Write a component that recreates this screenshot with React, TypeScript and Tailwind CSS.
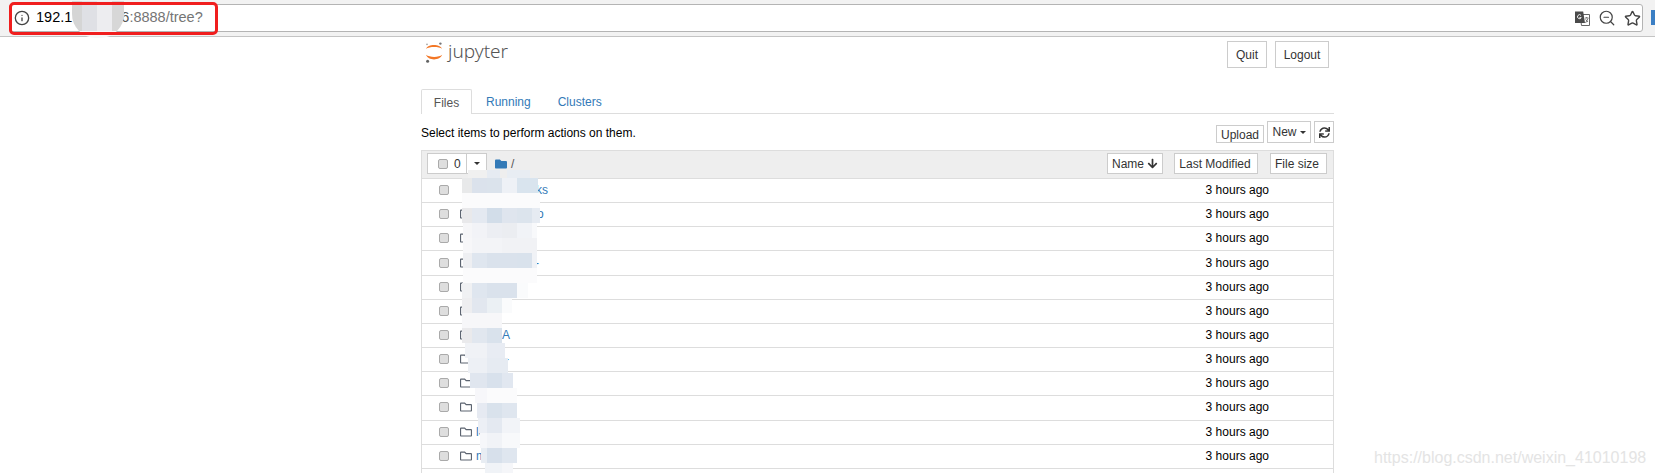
import { Info, Star, ZoomOut } from "lucide-react";
import { FaArrowDown, FaFolder, FaRegFolder, FaSync } from "react-icons/fa";

// row content: tail of the name left visible beside the blurred strip
const rows = [
  { name: "ks", nameX: 114, icon: false },
  { name: "o", nameX: 115, icon: true },
  { name: "", nameX: 0, icon: true },
  { name: "-", nameX: 113, icon: true },
  { name: "", nameX: 0, icon: true },
  { name: "", nameX: 0, icon: true },
  { name: "A", nameX: 80, icon: true },
  { name: "-", nameX: 83, icon: true },
  { name: "", nameX: 0, icon: true },
  { name: "", nameX: 0, icon: true },
  { name: "le", nameX: 54, icon: true },
  { name: "m", nameX: 54, icon: true },
];

// mosaic painted over the file names: top, height, then [left, right, colour] cells
type Strip = [number, number, Array<[number, number, string]>];
const mosaic: Strip[] = [
  [170, 8, [[468, 487, "#f0f0f0"], [487, 500, "#e6ebf2"], [507, 530, "#e8edf3"]]],
  [178, 15, [[462, 472, "#e8e9ea"], [472, 487, "#dbe2ec"], [487, 502, "#dbe3ec"], [502, 517, "#eef1f6"], [517, 538, "#d9e4ee"]]],
  [193, 15, [[462, 540, "#fbfbfc"]]],
  [208, 15, [[462, 472, "#e9e9eb"], [472, 487, "#e4e9f1"], [487, 502, "#d2dde9"], [502, 517, "#dfe5ee"], [517, 532, "#dce4ed"], [532, 540, "#e6ebf2"]]],
  [223, 15, [[463, 472, "#f6f6f8"], [472, 487, "#f2f3f7"], [487, 502, "#eceef3"], [502, 517, "#ebedf1"], [517, 532, "#f1f3f7"], [532, 537, "#f8f9fb"]]],
  [238, 15, [[463, 472, "#f7f7f9"], [472, 502, "#f3f4f7"], [502, 537, "#f1f2f5"]]],
  [253, 15, [[463, 472, "#eeeff2"], [472, 487, "#dfe6ef"], [487, 517, "#dae2ec"], [517, 532, "#d9e2ec"], [532, 537, "#f0f2f6"]]],
  [268, 15, [[463, 537, "#fbfbfc"]]],
  [283, 15, [[462, 472, "#f0f1f3"], [472, 487, "#dfe6ef"], [487, 517, "#dae2ec"], [517, 528, "#fafbfc"]]],
  [298, 15, [[462, 472, "#eeeef0"], [472, 487, "#e2e7ef"], [487, 502, "#ebf0f4"], [502, 512, "#fafbfc"]]],
  [313, 15, [[462, 502, "#f7f7f9"]]],
  [328, 15, [[462, 472, "#eaeaec"], [472, 487, "#e1e7ef"], [487, 502, "#d9e2ec"]]],
  [343, 15, [[465, 487, "#f0f2f6"], [487, 505, "#e8ecf3"]]],
  [358, 15, [[468, 487, "#edf0f5"], [487, 508, "#e6ebf2"]]],
  [373, 15, [[470, 487, "#e0e6ef"], [487, 502, "#d8e1ec"], [502, 513, "#e1e7f0"]]],
  [388, 15, [[475, 487, "#f7f7fa"], [487, 517, "#fbfbfc"]]],
  [403, 15, [[477, 487, "#e6eaf2"], [487, 502, "#d9e2ec"], [502, 517, "#dfe6ef"]]],
  [418, 15, [[478, 487, "#eceff5"], [487, 502, "#e4e9f1"], [502, 520, "#f2f4f8"]]],
  [433, 15, [[480, 487, "#f6f7fa"], [487, 502, "#f1f3f7"], [502, 520, "#f8f9fb"]]],
  [448, 15, [[481, 487, "#e8edf3"], [487, 502, "#d7e0eb"], [502, 517, "#dfe6ef"]]],
  [463, 10, [[485, 502, "#f0f3f7"], [502, 513, "#f5f6f9"]]],
];

function JupyterLogo() {
  return (
    <svg width="19" height="21" viewBox="0 0 19 21" aria-hidden>
      <path d="M1 6.8C2.8 1.6 15 1.6 17.2 6.8C14 4.4 4.5 4.4 1 6.8Z" fill="#f37726" />
      <path d="M1 12.8C3 19 15 19 17.2 12.8C14 15.6 4.5 15.6 1 12.8Z" fill="#f37726" />
      <circle cx="15.4" cy="1.6" r="1.2" fill="#767677" />
      <circle cx="2.6" cy="19.2" r="1.5" fill="#616262" />
      <circle cx="2" cy="2.4" r="0.8" fill="#9e9e9e" />
    </svg>
  );
}

function TranslateIcon() {
  return (
    <svg width="15" height="15" viewBox="0 0 15 15" aria-hidden>
      <path d="M5 3.5H14.5V14.5H6.5Z" fill="#fff" stroke="#666" />
      <path d="M0 0.5H8.2L10 12H0Z" fill="#4a4a4a" />
      <path d="M6 4.4a2 2 0 1 0 0.3 2.2H4.4" fill="none" stroke="#fff" strokeWidth="0.9" />
      <path d="M10 7H13.5M11.7 6V7M10.5 12L13 7.5M10.6 8.4L13 11" stroke="#555" strokeWidth="0.8" fill="none" />
    </svg>
  );
}

function Checkbox() {
  return <span className="block h-[10px] w-[10px] shrink-0 rounded-[2px] border border-[#aaaaaa] bg-[#dedede]" />;
}

function Caret() {
  return <span className="inline-block h-0 w-0 border-x-[3px] border-t-[3px] border-x-transparent border-t-[#333333]" />;
}

function Row({ row }: { row: (typeof rows)[number] }) {
  return (
    <div className="relative flex h-[24.17px] items-center border-b border-[#dddddd] pb-[1px] pr-[64px]">
      <div className="ml-[17px] w-[21px]">
        <Checkbox />
      </div>
      {row.icon && <FaRegFolder className="text-[12px] text-[#5c6470]" />}
      {row.name && (
        <span className="absolute text-[#337ab7]" style={{ left: row.nameX }}>
          {row.name}
        </span>
      )}
      <span className="ml-auto">3 hours ago</span>
    </div>
  );
}

export default function App() {
  return (
    <div className="relative h-[473px] w-[1655px] overflow-hidden bg-white font-['Liberation_Sans',Arial,sans-serif] text-[12px] text-black">
      <div className="flex h-[37px] items-start border-b border-[#c4c4c4] bg-[#f2f2f2] pl-[9px] pt-[4px]">
        <div className="flex h-[28px] w-[1636px] items-center rounded-[3px] border border-[#b4b4b4] bg-white pl-[4px]">
          <Info className="h-[16px] w-[16px] text-[#444444]" strokeWidth={2} />
          <span className="ml-[6px] text-[14.5px] text-[#000000]">192.1</span>
          <span className="ml-[49px] text-[14.5px] text-[#555555]">6</span>
          <span className="text-[14.5px] text-[#757575]">:8888/tree?</span>
          <div className="ml-auto flex items-center gap-[8px] pr-[1px]">
            <TranslateIcon />
            <ZoomOut className="h-[18px] w-[18px] text-[#444444]" strokeWidth={1.6} />
            <Star className="h-[17px] w-[17px] text-[#444444]" strokeWidth={2} />
          </div>
        </div>
        <div className="ml-[8px] mt-[6px] h-[15px] w-[4px] bg-[#3b7fc4]" />
      </div>

      <main className="ml-[421px] w-[913px]">
        <header className="flex h-[52px] items-start justify-between pl-[4px] pr-[5px]">
          <div className="flex items-start gap-[4px] pt-[5px]">
            <JupyterLogo />
            <span className="-mt-[2px] font-['Noto_Sans',sans-serif] text-[19px] font-light leading-[22px] text-[#555555]">jupyter</span>
          </div>
          <div className="flex gap-[8px] pt-[4px]">
            <button className="h-[27px] w-[40px] border border-[#cccccc] text-[#333333]">Quit</button>
            <button className="h-[27px] w-[54px] border border-[#cccccc] text-[#333333]">Logout</button>
          </div>
        </header>

        <nav className="flex h-[25px] border-b border-[#dddddd]">
          <span className="flex h-[25px] w-[51px] items-center justify-center rounded-t-[2px] border border-b-0 border-[#dddddd] bg-white pt-[2px] text-[#555555]">Files</span>
          <span className="ml-[14px] flex items-center pt-[2px] text-[#337ab7]">Running</span>
          <span className="ml-[27px] flex items-center pt-[2px] text-[#337ab7]">Clusters</span>
        </nav>

        <div className="flex h-[36px] items-start justify-between">
          <span className="pt-[10px]">Select items to perform actions on them.</span>
          <div className="flex items-start gap-[3px] pt-[7px]">
            <button className="mt-[4px] h-[18px] w-[48px] border border-[#cccccc] pt-[2px] leading-[14px] text-[#333333]">Upload</button>
            <button className="flex h-[22px] w-[44px] items-center justify-center gap-[3px] border border-[#cccccc] text-[#333333]">
              New <Caret />
            </button>
            <button className="flex h-[22px] w-[20px] items-center justify-center border border-[#cccccc] text-[#333333]">
              <FaSync className="text-[11px]" />
            </button>
          </div>
        </div>

        <div className="border-x border-[#dddddd]">
          <div className="flex h-[29px] items-center border-y border-[#dddddd] bg-[#eeeeee] pb-[2px] pl-[5px] pr-[6px]">
            <div className="flex h-[21px] items-center border border-[#cccccc] bg-white">
              <span className="flex h-full w-[39px] items-center gap-[6px] border-r border-[#cccccc] pl-[10px] text-[#333333]">
                <Checkbox />0
              </span>
              <span className="flex h-full w-[19px] items-center justify-center"><Caret /></span>
            </div>
            <FaFolder className="ml-[8px] text-[12px] text-[#337ab7]" />
            <span className="ml-[4px] text-[#555555]">/</span>
            <div className="ml-auto flex items-center gap-[11px]">
              <button className="flex h-[21px] w-[56px] items-center justify-center gap-[3px] border border-[#cccccc] bg-white text-[#333333]">
                Name <FaArrowDown className="text-[11px]" />
              </button>
              <button className="h-[21px] w-[84px] border border-[#cccccc] bg-white pr-[2px] text-[#333333]">Last Modified</button>
              <button className="ml-[1px] h-[21px] w-[57px] border border-[#cccccc] bg-white pr-[3px] text-[#333333]">File size</button>
            </div>
          </div>
          {rows.map((row, i) => (
            <Row key={i} row={row} />
          ))}
          <div className="h-[6px]" />
        </div>
      </main>

      {/* privacy smudge over the address and the file names */}
      <div className="absolute left-[72px] top-[1px] flex h-[37px] w-[52px] overflow-hidden rounded-b-[24px] bg-[#f7f7f7]">
        <div className="h-[30px] w-[10px] bg-[#d5d5d5]" />
        <div className="h-[30px] w-[15px] bg-[#dfe0e5]" />
        <div className="h-[30px] w-[15px] bg-[#ededf0]" />
        <div className="h-[30px] w-[12px] bg-[#d7d7d7]" />
      </div>
      <div className="absolute left-[9px] top-[2px] h-[33px] w-[209px] rounded-[5px] border-[3px] border-[#f01e1e]" />
      {mosaic.map(([top, height, cells]) =>
        cells.map(([left, right, color]) => (
          <div key={`${top}-${left}`} className="absolute" style={{ top, left, height, width: right - left, backgroundColor: color }} />
        )),
      )}

      <span className="absolute left-[1374px] top-[446px] text-[16px] text-[#e4e4e4]">https://blog.csdn.net/weixin_41010198</span>
    </div>
  );
}
